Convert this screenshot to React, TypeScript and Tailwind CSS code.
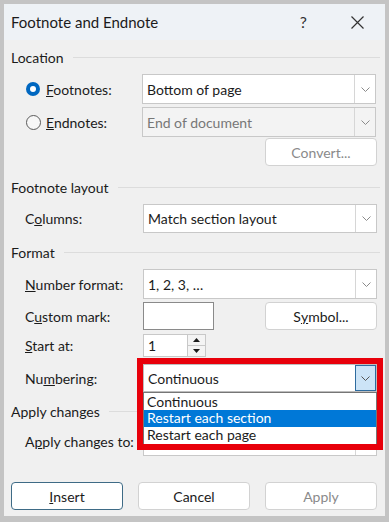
import React from 'react';

const font = { fontFamily: 'Lato, "Noto Sans", sans-serif' };

function Chevron({ color = '#8a8a8a' }: { color?: string }) {
  return (
    <svg width="9" height="5" viewBox="0 0 9 5" fill="none">
      <path d="M0.5 0.5 L4.5 4.5 L8.5 0.5" stroke={color} strokeWidth="1" />
    </svg>
  );
}

function Select({ value, disabled, h = 'h-[30px]' }: { value: string; disabled?: boolean; h?: string }) {
  return (
    <div
      className={`flex ${h} w-[234px] border border-[#c8c8c8] ${disabled ? 'bg-[#f3f3f3] text-[#777]' : 'bg-white text-[#1b1b1b]'}`}
    >
      <div className="flex flex-1 items-center pl-[4px] text-[14px]">{value}</div>
      <div className="flex w-[21px] items-center justify-center border-l border-[#d6d6d6]">
        <Chevron />
      </div>
    </div>
  );
}

function Header({ text, mt }: { text: string; mt: string }) {
  return (
    <div className={`flex h-[20px] items-center ${mt} pl-[7px] pr-[5px]`}>
      <span className="text-[14px] text-[#1b1b1b]">{text}</span>
      <div className="ml-[9px] h-px flex-1 bg-[#dcdcdc]" />
    </div>
  );
}

function Btn({ children, disabled, primary }: { children: React.ReactNode; disabled?: boolean; primary?: boolean }) {
  return (
    <div
      className={`flex h-[28px] w-[112px] items-center justify-center rounded-[4px] border bg-white text-[14px] ${
        primary ? 'border-[#3e6b86]' : 'border-[#d2d2d2]'
      } ${disabled ? 'bg-[#fbfbfb] text-[#8a8a8a]' : 'text-[#1b1b1b]'}`}
    >
      {children}
    </div>
  );
}

function Row({ label, children, mt, h }: { label: React.ReactNode; children: React.ReactNode; mt: string; h: string }) {
  return (
    <div className={`flex ${h} ${mt} items-center pl-[21px]`}>
      <div className="w-[118px] whitespace-nowrap text-[14px] text-[#1b1b1b]">{label}</div>
      {children}
    </div>
  );
}

export default function App() {
  return (
    <div className="h-[522px] w-[389px] bg-[#c4c4c4] pl-[4px] pt-[4px]" style={font}>
      <div className="flex h-[512px] w-[381px] flex-col bg-[#f0f0f0]">
        {/* title bar */}
        <div className="flex h-[36px] items-center bg-[#eef2f6] pl-[7px]">
          <span className="text-[15px] text-[#1b1b1b]">Footnote and Endnote</span>
          <span className="ml-auto mr-[44px] text-[16px] text-[#333]">?</span>
          <svg className="mr-[21px]" width="13" height="13" viewBox="0 0 13 13">
            <path d="M0.5 0.5 L12.5 12.5 M12.5 0.5 L0.5 12.5" stroke="#333" strokeWidth="1.2" />
          </svg>
        </div>

        <Header text="Location" mt="mt-[7px]" />
        <div className="mt-[7px] flex h-[30px] items-center pl-[22px]">
          <div className="flex h-[14px] w-[14px] items-center justify-center rounded-full bg-[#0067c0]">
            <div className="h-[6px] w-[6px] rounded-full bg-white" />
          </div>
          <span className="ml-[6px] w-[96px] text-[14px] text-[#1b1b1b]">
            <u>F</u>ootnotes:
          </span>
          <Select value="Bottom of page" />
        </div>
        <div className="mt-[3px] flex h-[30px] items-center pl-[22px]">
          <div className="h-[15px] w-[15px] rounded-full border border-[#5a5a5a] bg-[#f7f7f7]" />
          <span className="ml-[5px] w-[96px] text-[14px] text-[#1b1b1b]">
            <u>E</u>ndnotes:
          </span>
          <Select value="End of document" disabled />
        </div>
        <div className="mt-[1px] flex justify-end pr-[8px]">
          <Btn disabled>Convert...</Btn>
        </div>

        <Header text="Footnote layout" mt="mt-[11px]" />
        <Row label={<>C<u>o</u>lumns:</>} mt="mt-[7px]" h="h-[29px]">
          <Select value="Match section layout" h="h-[29px]" />
        </Row>

        <Header text="Format" mt="mt-[9px]" />
        <Row label={<><u>N</u>umber format:</>} mt="mt-[7px]" h="h-[30px]">
          <Select value="1, 2, 3, …" />
        </Row>
        <Row label={<>C<u>u</u>stom mark:</>} mt="mt-[3px]" h="h-[28px]">
          <div className="h-[28px] w-[71px] border border-[#8a8a8a] bg-white" />
          <div className="ml-auto mr-[8px]">
            <Btn>
              S<u>y</u>mbol...
            </Btn>
          </div>
        </Row>
        <Row label={<><u>S</u>tart at:</>} mt="mt-[4px]" h="h-[23px]">
          <div className="flex h-[23px] w-[63px] border border-[#c8c8c8] bg-white">
            <div className="flex flex-1 items-center pl-[4px] text-[14px] text-[#1b1b1b]">1</div>
            <div className="flex w-[18px] flex-col border-l border-[#c8c8c8]">
              <div className="flex flex-1 items-center justify-center border-b border-[#c8c8c8] bg-[#f4f4f4]">
                <svg width="7" height="4" viewBox="0 0 7 4">
                  <path d="M0 4 L3.5 0 L7 4 Z" fill="#1b1b1b" />
                </svg>
              </div>
              <div className="flex flex-1 items-center justify-center bg-[#f4f4f4]">
                <svg width="7" height="4" viewBox="0 0 7 4">
                  <path d="M0 0 L3.5 4 L7 0 Z" fill="#1b1b1b" />
                </svg>
              </div>
            </div>
          </div>
        </Row>
        <Row label={<>Nu<u>m</u>bering:</>} mt="mt-[7px]" h="h-[28px]">
          <div className="relative">
            <div className="flex h-[28px] w-[234px] border border-[#bdbdbd] bg-white text-[#1b1b1b]">
              <div className="flex flex-1 items-center pl-[4px] text-[14px]">Continuous</div>
              <div className="flex w-[21px] items-center justify-center border border-[#2e6b9e] bg-[#cce4f7]">
                <Chevron color="#555" />
              </div>
            </div>
            {/* open list */}
            <div className="absolute left-0 top-[28px] z-10 flex w-[234px] flex-col border border-[#767676] bg-white py-[1px] text-[14px] leading-[16px]">
              <div className="h-[16px] pl-[3px] text-[#1b1b1b]">Continuous</div>
              <div className="h-[17px] bg-[#0078d7] pl-[3px] text-white">Restart each section</div>
              <div className="h-[17px] pl-[3px] text-[#1b1b1b]">Restart each page</div>
            </div>
            {/* red annotation frame */}
            <div className="pointer-events-none absolute left-[-6px] top-[-6px] z-20 h-[92px] w-[246px] border-[6px] border-[#e8000b]" />
          </div>
        </Row>

        <Header text="Apply changes" mt="mt-[9px]" />
        <Row label={<>A<u>p</u>ply changes to:</>} mt="mt-[5px]" h="h-[30px]">
          <Select value="" />
        </Row>

        <div className="mt-[26px] flex gap-[15px] pl-[7px]">
          <Btn primary>
            <u>I</u>nsert
          </Btn>
          <Btn>Cancel</Btn>
          <Btn disabled>Apply</Btn>
        </div>
      </div>
    </div>
  );
}
